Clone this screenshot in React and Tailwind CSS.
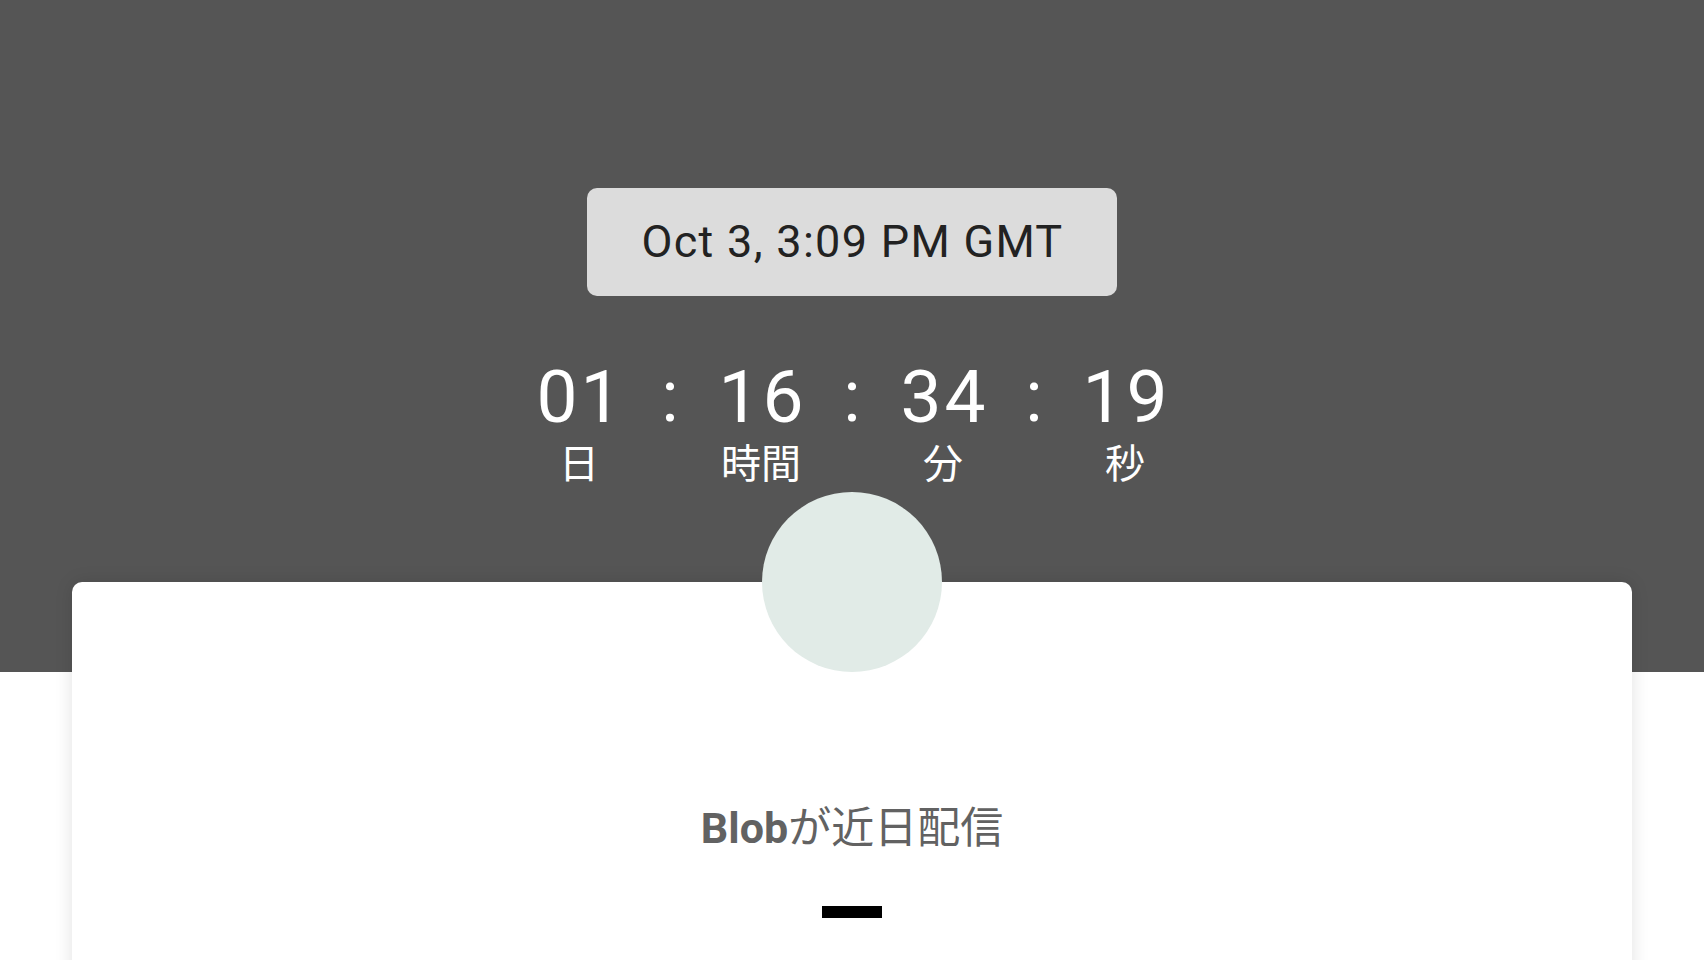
const units = [
  { value: "01", label: "日" },
  { value: "16", label: "時間" },
  { value: "34", label: "分" },
  { value: "19", label: "秒" },
];

function Countdown() {
  return (
    <div className="mt-[65px] flex items-start text-white">
      {units.map((u, i) => (
        <div key={u.label} className="flex items-start">
          {i > 0 && (
            <div className="w-[82px] text-center text-[72px] leading-[72px]">:</div>
          )}
          <div className="flex w-[100px] flex-col items-center">
            <span className="pl-[3px] text-[73px] leading-[72px] tracking-[3px]">{u.value}</span>
            <span className="mt-[8px] text-[40px] leading-[40px] font-['Noto_Sans_CJK_JP',sans-serif]">
              {u.label}
            </span>
          </div>
        </div>
      ))}
    </div>
  );
}

export default function App() {
  return (
    <div className="min-h-screen overflow-hidden bg-white font-['Roboto','Noto_Sans_CJK_JP',sans-serif]">
      <header className="flex h-[672px] flex-col items-center bg-[#555555] pt-[188px]">
        <div className="flex h-[108px] w-[530px] items-center justify-center rounded-[10px] bg-[#dcdcdc] pl-[1px] text-[45px] tracking-[1.3px] text-[#222222]">
          Oct 3, 3:09 PM GMT
        </div>
        <Countdown />
      </header>
      <main className="relative mx-[72px] -mt-[90px] flex h-[420px] flex-col items-center rounded-[10px] bg-white shadow-[0_0_18px_rgba(0,0,0,0.12)]">
        <div className="-mt-[90px] size-[180px] rounded-full bg-[#e1ebe7]" />
        <h1 className="mt-[131px] text-[43px] leading-[43px] text-[#626262]">
          <span className="font-bold">Blob</span>
          <span className="font-['Noto_Sans_CJK_JP',sans-serif] font-normal">が近日配信</span>
        </h1>
        <div className="mt-[56px] h-[12px] w-[60px] bg-black" />
      </main>
    </div>
  );
}
